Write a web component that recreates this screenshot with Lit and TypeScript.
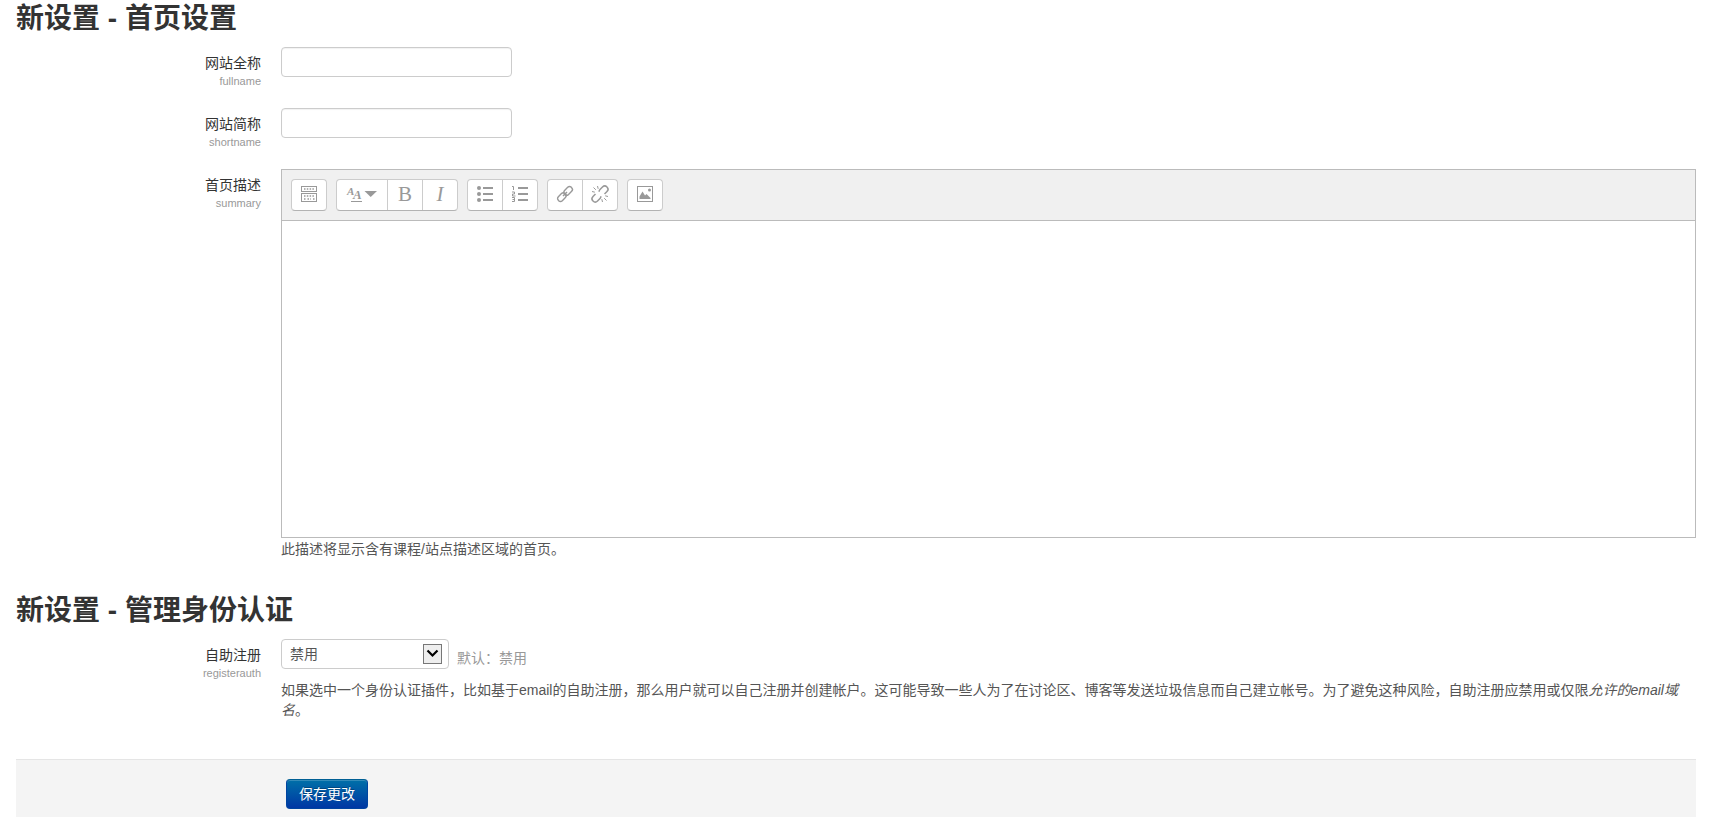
import { LitElement, html, css, svg } from "lit";
import { customElement, property } from "lit/decorators.js";

const icons = {
  toggle: svg`
    <rect x="0.5" y="0.5" width="15" height="5" fill="none" stroke="#999"/>
    <path d="M3 3h10.5" stroke="#999" stroke-width="1.5" stroke-dasharray="1.5 1.3"/>
    <rect x="0.5" y="7.5" width="15" height="8" fill="none" stroke="#999"/>
    <path d="M3 10h10.5M3 13h2M6.5 13h3.5M12 13h1.5" stroke="#999" stroke-width="1.5" stroke-dasharray="1.5 1.3"/>`,
  bullets: svg`
    <g fill="#999"><circle cx="2" cy="2" r="2"/><circle cx="2" cy="8" r="2"/><circle cx="2" cy="14" r="2"/>
    <rect x="6" y="1" width="10" height="2"/><rect x="6" y="7" width="10" height="2"/><rect x="6" y="13" width="10" height="2"/></g>`,
  numbers: svg`
    <g fill="#999"><rect x="6" y="1" width="10" height="2"/><rect x="6" y="7" width="10" height="2"/><rect x="6" y="13" width="10" height="2"/></g>
    <path d="M0 0.5H1.5V4M0 6H2.5V8H0.5V10H3.5M0 11.5H2.5V15.5H0M0.5 13.5H2.5" fill="none" stroke="#999"/>`,
  link: svg`
    <g fill="none" stroke="#999" stroke-width="1.4" transform="rotate(-45 8 8)">
    <rect x="-1.2" y="5.2" width="9.6" height="5.6" rx="2.6"/><rect x="7.6" y="5.2" width="9.6" height="5.6" rx="2.6"/><path d="M5.2 8h5.6"/></g>`,
  unlink: svg`
    <g fill="none" stroke="#999" stroke-width="1.5" transform="rotate(-45 8 8)">
    <path d="M7 10.2a3 3 0 0 1-2.200 1H1.300a3.200 3.200 0 0 1 0-6.400H4.800"/><path d="M9 5.800a3 3 0 0 1 2.200-1h3.500a3.200 3.200 0 0 1 0 6.400H11.200"/></g>
    <path d="M5.500 0l0.700 2.800M1.500 1.500l2.300 2.300M0 5.500l2.800 0.700M9.800 13.200l0.700 2.800M12.200 12.200l2.300 2.300M13.200 9.800l2.800 0.700" stroke="#999" fill="none"/>`,
  image: svg`
    <rect x="0.5" y="0.5" width="15" height="15" fill="none" stroke="#999"/>
    <path d="M2.5 13V10.5L5.5 5.5 8 9.5 9.5 8 13.5 12V13Z" fill="#999"/><circle cx="12.5" cy="4" r="1.5" fill="#999"/>`,
};

const icon = (shape: unknown) =>
  html`<svg class="icon" width="16" height="16" viewBox="0 0 16 16" aria-hidden="true">${shape}</svg>`;

@customElement("rich-editor")
export class RichEditor extends LitElement {
  @property() label = "";

  static styles = css`
    :host { display: block; border: 1px solid #bbb; }
    .toolbar { display: flex; flex-wrap: wrap; gap: 9px; padding: 9px; background: #f0f0f0; border-bottom: 1px solid #bbb; }
    .group { display: flex; border: 1px solid #ccc; border-bottom-color: #b3b3b3; border-radius: 4px; background: #fff; }
    button { display: flex; align-items: center; justify-content: center; box-sizing: border-box; width: 34px; height: 30px; padding: 0 0 2px; border: 0; border-radius: 3px; background: none; color: #999; font: 21px "Liberation Serif", serif; cursor: pointer; }
    button + button { width: 35px; border-left: 1px solid #ccc; border-radius: 0 3px 3px 0; }
    button.wide { width: 50px; }
    button:hover { background: #f5f5f5; }
    .italic { font-style: italic; }
    .icon, .styles { display: block; overflow: visible; }
    textarea { display: block; box-sizing: border-box; width: 100%; height: 316px; padding: 4px; border: 0; outline: 0; resize: none; background: #fff; color: #555; font: 14px/20px "Liberation Sans", "Noto Sans CJK SC", sans-serif; }
  `;

  render() {
    return html`
      <div class="toolbar" role="toolbar">
        <div class="group"><button type="button" aria-label="显示更多按钮">${icon(icons.toggle)}</button></div>
        <div class="group">
          <button type="button" class="wide" aria-label="段落样式">
            <svg class="styles" width="30" height="18" viewBox="0 0 30 18" aria-hidden="true">
              <g fill="#999" font-family="Liberation Serif, serif" font-style="italic" font-weight="bold">
                <text x="0" y="10" font-size="11">A</text>
                <text x="6" y="14" font-size="13">A</text>
              </g>
              <path d="M4 16.5H15" stroke="#999"/>
              <path d="M17.5 6H30L23.7 12Z" fill="#999"/>
            </svg>
          </button>
          <button type="button">B</button>
          <button type="button" class="italic">I</button>
        </div>
        <div class="group">
          <button type="button" aria-label="无序列表">${icon(icons.bullets)}</button>
          <button type="button" aria-label="有序列表">${icon(icons.numbers)}</button>
        </div>
        <div class="group">
          <button type="button" aria-label="链接">${icon(icons.link)}</button>
          <button type="button" aria-label="取消链接">${icon(icons.unlink)}</button>
        </div>
        <div class="group"><button type="button" aria-label="图像">${icon(icons.image)}</button></div>
      </div>
      <textarea aria-label=${this.label}></textarea>
    `;
  }
}

@customElement("app-root")
export class AppRoot extends LitElement {
  static styles = css`
    :host { display: block; color: #333; background: #fff; font: 14px/20px "Liberation Sans", "Noto Sans CJK SC", sans-serif; }
    form { display: flex; flex-direction: column; box-sizing: border-box; min-height: 100vh; padding: 0 14px 0 16px; }
    h2 { margin: 0 0 9px; font-size: 28px; line-height: 38px; font-weight: bold; }
    section + section { margin-top: 33px; }
    .row { display: grid; grid-template-columns: 245px minmax(0, 1fr); column-gap: 20px; min-height: 46px; }
    .row + .row { margin-top: 15px; }
    .name { padding-top: 6px; text-align: right; }
    .name label, .key { display: block; }
    .key { color: #999; font-size: 11px; line-height: 16px; }
    input, select { box-sizing: border-box; height: 30px; border: 1px solid #ccc; border-radius: 4px; background: #fff; color: #555; font: inherit; }
    input { display: block; width: 231px; padding: 4px 6px; box-shadow: inset 0 1px 1px #f2f2f2; }
    .choice { display: flex; align-items: flex-end; gap: 8px; }
    .picker { position: relative; display: flex; }
    select { width: 168px; padding: 0 30px 0 8px; appearance: none; }
    .arrow { position: absolute; right: 7px; top: 5px; pointer-events: none; }
    .default { color: #999; padding-bottom: 1px; }
    .help { margin: 0; color: #555; }
    rich-editor + .help { padding-top: 1px; }
    .choice + .help { margin-top: 11px; }
    .actions { flex: 1; margin-top: 39px; padding: 19px 0 8px 270px; background: #f4f4f4; border-top: 1px solid #e5e5e5; }
    .save { height: 30px; padding: 0 12px; border: 1px solid #0044a0; border-top-color: #005f94; border-radius: 4px; background: linear-gradient(#0070a8, #0037a4); color: #fff; font: inherit; text-shadow: 0 -1px 0 rgba(0, 0, 0, 0.25); box-shadow: inset 0 1px 0 rgba(255, 255, 255, 0.2); cursor: pointer; }
  `;

  private name(id: string, label: string) {
    return html`<div class="name"><label for=${id}>${label}</label><span class="key">${id}</span></div>`;
  }

  render() {
    return html`
      <form @submit=${(e: Event) => e.preventDefault()}>
        <section>
          <h2>新设置 - 首页设置</h2>
          <div class="row">
            ${this.name("fullname", "网站全称")}
            <div><input id="fullname" type="text" /></div>
          </div>
          <div class="row">
            ${this.name("shortname", "网站简称")}
            <div><input id="shortname" type="text" /></div>
          </div>
          <div class="row">
            ${this.name("summary", "首页描述")}
            <div>
              <rich-editor id="summary" label="首页描述"></rich-editor>
              <p class="help">此描述将显示含有课程/站点描述区域的首页。</p>
            </div>
          </div>
        </section>
        <section>
          <h2>新设置 - 管理身份认证</h2>
          <div class="row">
            ${this.name("registerauth", "自助注册")}
            <div>
              <div class="choice">
                <div class="picker">
                  <select id="registerauth"><option>禁用</option></select>
                  <svg class="arrow" width="19" height="20" viewBox="0 0 19 20" aria-hidden="true">
                    <rect x="0.5" y="0.5" width="18" height="19" fill="#eee" stroke="#777"/>
                    <path d="M4.5 6.5L9.5 11.5L14.5 6.5" fill="none" stroke="#000" stroke-width="2.2"/>
                  </svg>
                </div>
                <span class="default">默认：禁用</span>
              </div>
              <p class="help">如果选中一个身份认证插件，比如基于email的自助注册，那么用户就可以自己注册并创建帐户。这可能导致一些人为了在讨论区、博客等发送垃圾信息而自己建立帐号。为了避免这种风险，自助注册应禁用或仅限<em>允许的email域名</em>。</p>
            </div>
          </div>
        </section>
        <div class="actions"><button class="save" type="submit">保存更改</button></div>
      </form>
    `;
  }
}
